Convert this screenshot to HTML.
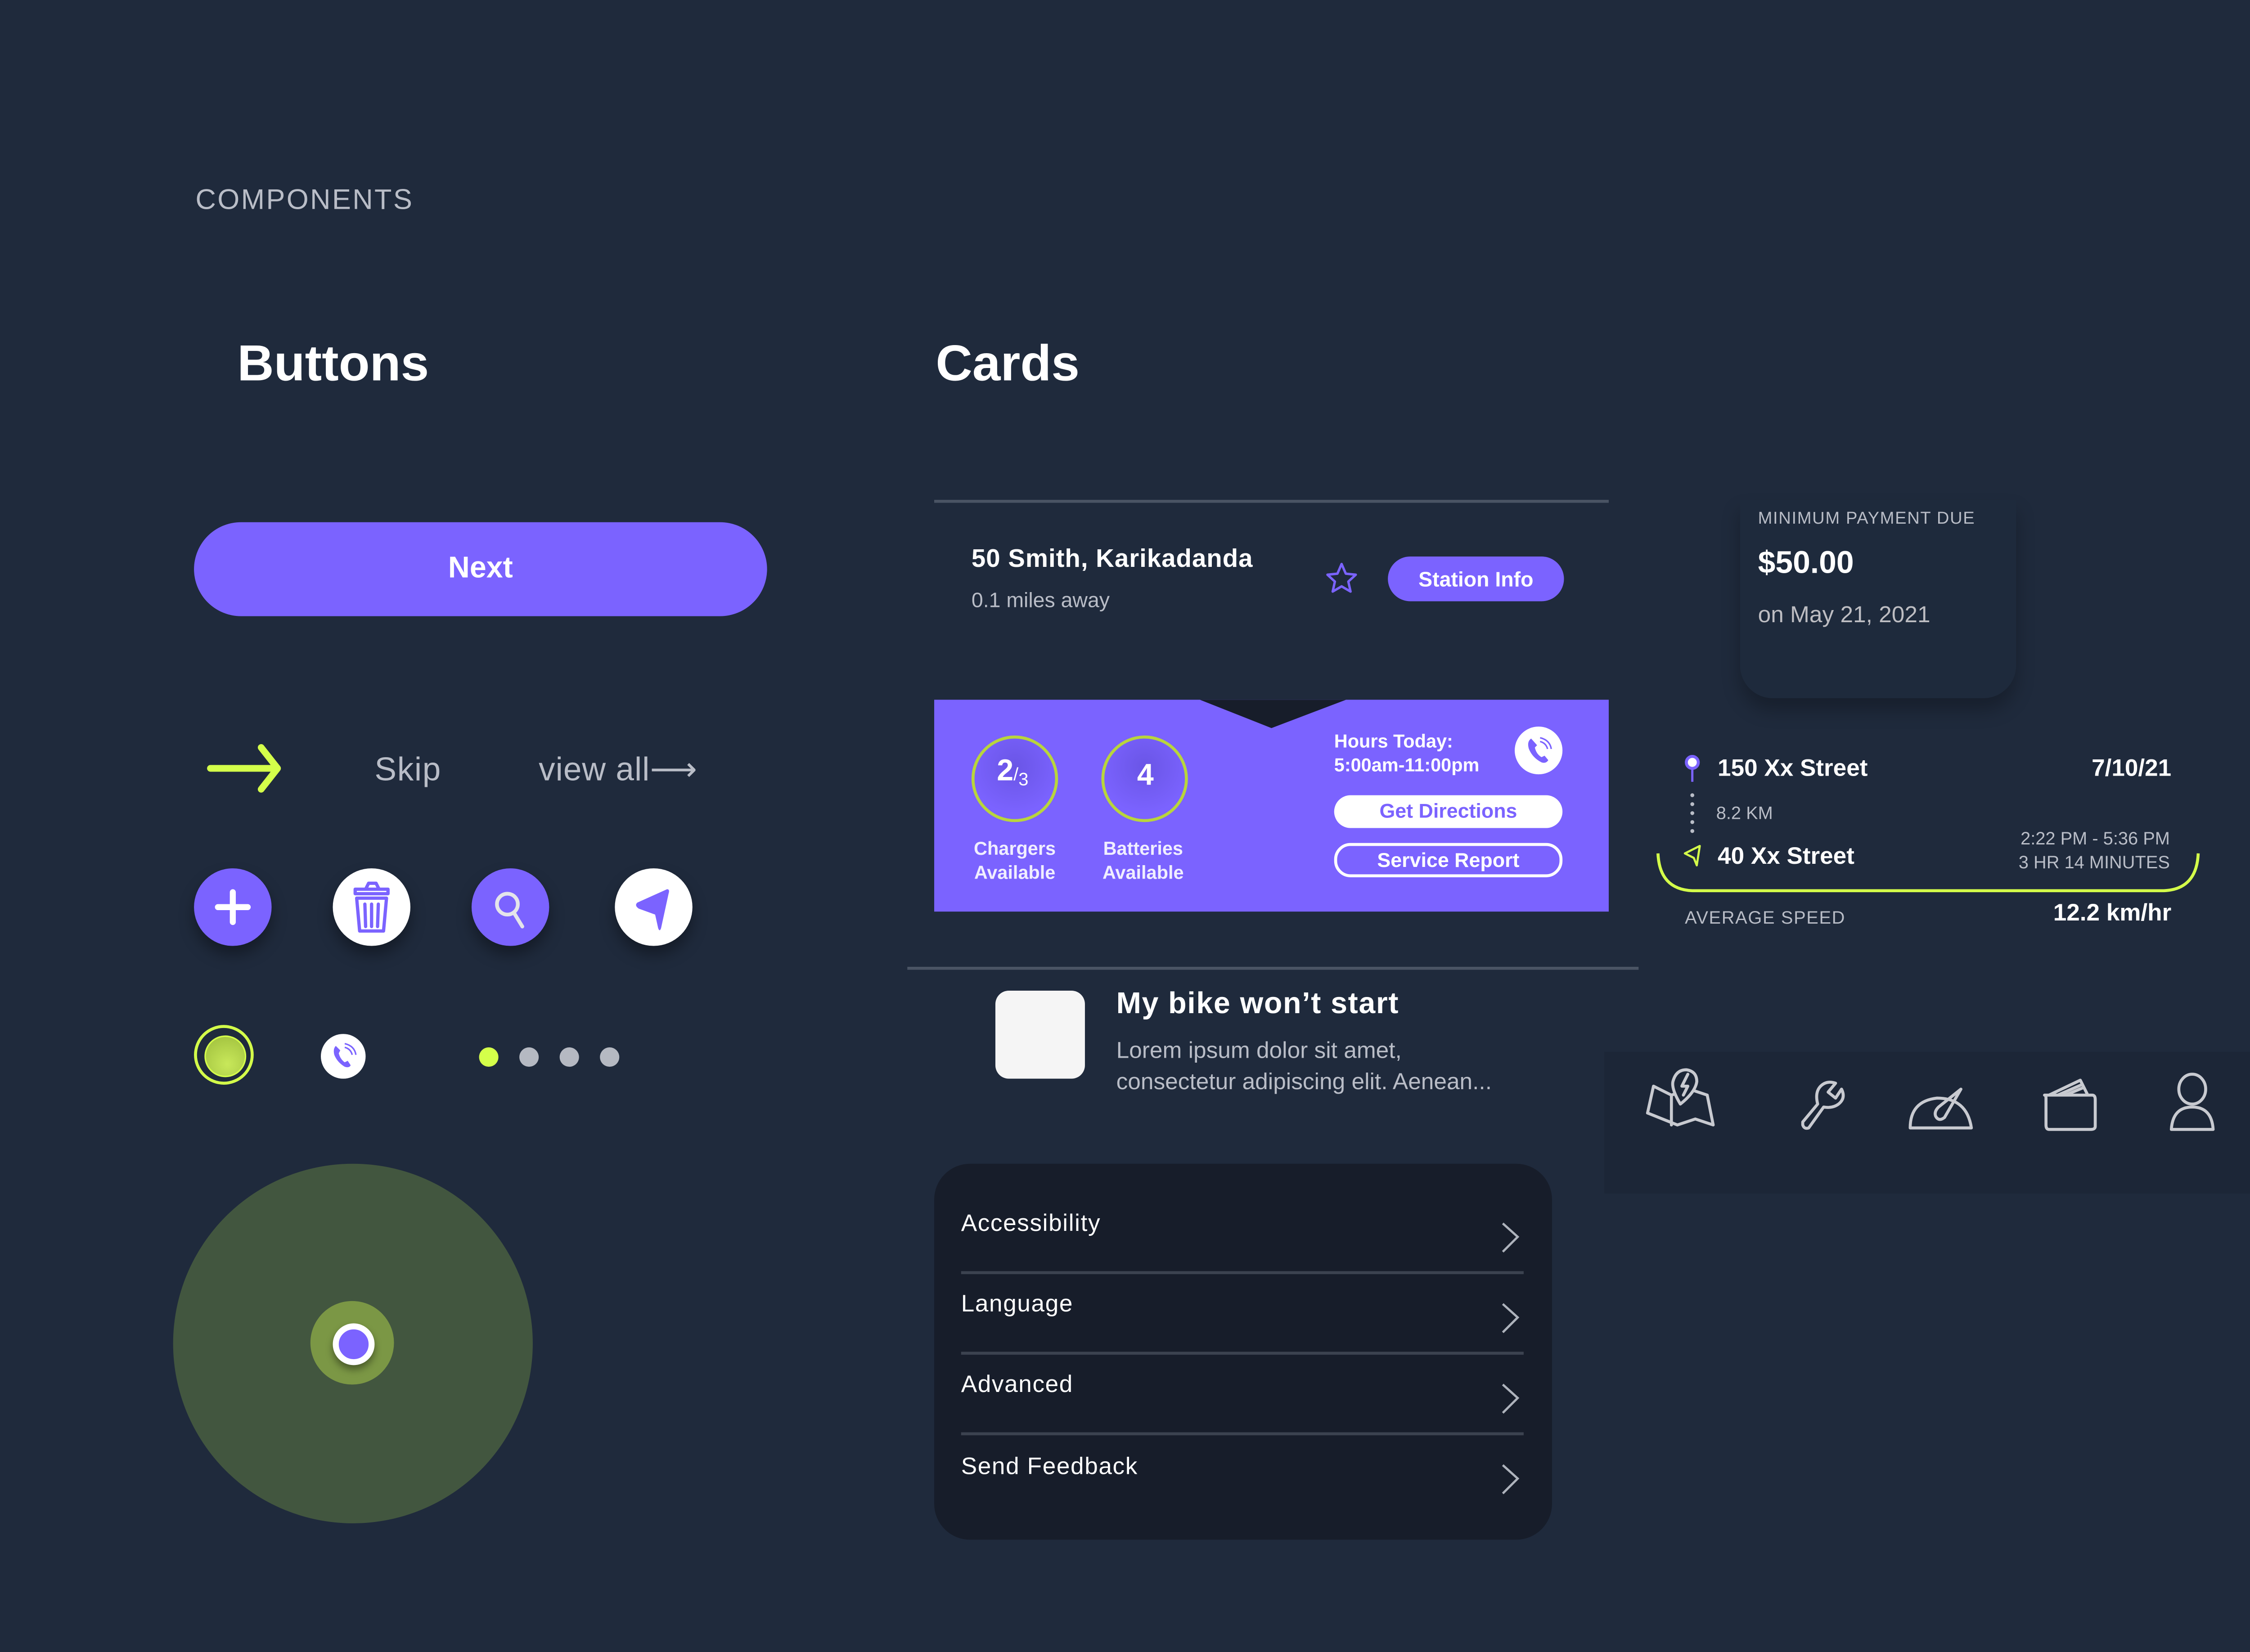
<!DOCTYPE html>
<html><head><meta charset="utf-8">
<style>
html,body{margin:0;padding:0;background:#1f2a3c;}
body{width:5200px;height:3672px;overflow:hidden;}
#s{position:absolute;left:0;top:0;width:1568px;height:1107px;transform:scale(3.3163);transform-origin:0 0;background:#1f2a3c;font-family:"Liberation Sans",sans-serif;color:#fff;}
.a{position:absolute;white-space:nowrap;}
.c{position:absolute;border-radius:50%;}
.g{color:#b9bdc7}
.row{position:absolute;left:644px;font-size:16px;letter-spacing:.5px;color:#fff}
.div{position:absolute;left:644px;width:377px;height:2px;background:#3c4350}
</style></head><body><div id="s">
<div class="a g" style="left:131px;top:124px;font-size:19px;letter-spacing:1px;">COMPONENTS</div>
<div class="a" style="left:159px;top:225px;font-size:34px;font-weight:bold;">Buttons</div>
<div class="a" style="left:627px;top:225px;font-size:34px;font-weight:bold;">Cards</div>

<div class="a" style="left:130px;top:350px;width:384px;height:63px;border-radius:32px;background:#7b63ff;text-align:center;line-height:63px;font-size:20px;font-weight:bold;">Next</div>

<svg class="a" style="left:138px;top:498px" width="54" height="34" viewBox="0 0 54 34"><path d="M3 17H47M37 3L48 17L37 31" fill="none" stroke="#d4ff4a" stroke-width="4.5" stroke-linecap="round" stroke-linejoin="round"/></svg>
<div class="a g" style="left:251px;top:503px;font-size:22px;letter-spacing:.5px;">Skip</div>
<div class="a g" style="left:361px;top:503px;font-size:22px;letter-spacing:.3px;">view all⟶</div>

<div class="c" style="left:130px;top:582px;width:52px;height:52px;background:#7b63ff;box-shadow:0 6px 10px rgba(0,0,0,.35)"></div>
<svg class="a" style="left:130px;top:582px" width="52" height="52"><path d="M26 16V36M16 26H36" stroke="#fff" stroke-width="4" stroke-linecap="round"/></svg>
<div class="c" style="left:223px;top:582px;width:52px;height:52px;background:#fff;box-shadow:0 6px 10px rgba(0,0,0,.35)"></div>
<svg class="a" style="left:223px;top:582px" width="52" height="52"><g fill="none" stroke="#7b63ff" stroke-width="2.2" stroke-linejoin="round"><path d="M15 14H37V17H15Z M22 14L24 10H29L31 14"/><path d="M16 20H36L34 42H18Z"/><path d="M21.5 24L22 39M26 24V39M30.5 24L30 39" stroke-linecap="round"/></g></svg>
<div class="c" style="left:316px;top:582px;width:52px;height:52px;background:#7b63ff;box-shadow:0 6px 10px rgba(0,0,0,.35)"></div>
<svg class="a" style="left:316px;top:582px" width="52" height="52"><circle cx="24" cy="24" r="7" fill="none" stroke="#e4e4ea" stroke-width="2.5"/><path d="M28.5 30L34 39" stroke="#e4e4ea" stroke-width="2.5" stroke-linecap="round"/></svg>
<div class="c" style="left:412px;top:582px;width:52px;height:52px;background:#fff;box-shadow:0 6px 10px rgba(0,0,0,.35)"></div>
<svg class="a" style="left:412px;top:582px" width="52" height="52"><path d="M15 23L35 14Q37 14 36 17L31 40Q30 43 29 40L27 31L16 27Q13 25 15 23Z" fill="#7b63ff"/></svg>

<div class="c" style="left:130px;top:687px;width:36px;height:36px;border:2px solid #d4ff4a;"></div>
<div class="c" style="left:137px;top:694px;width:26px;height:26px;background:radial-gradient(circle at 55% 70%,#c8e85a,#9dbd3c);border:1.5px solid #d4ff4a;"></div>
<div class="c" style="left:215px;top:693px;width:30px;height:30px;background:#fff;"></div>
<svg class="a" style="left:215px;top:693px" width="30" height="30"><path d="M10 8Q8 10 9 14Q11 19 16 22Q19 23 20 21L18 18L16 19Q13 17 12 13L13 11Z" fill="#7b63ff"/><path d="M16 9Q20 10 21 14M16 6.5Q22.5 8 23.5 14" fill="none" stroke="#7b63ff" stroke-width="1"/></svg>
<div class="c" style="left:321px;top:702px;width:13px;height:13px;background:#d4ff4a"></div>
<div class="c" style="left:348px;top:702px;width:13px;height:13px;background:#b5b9c2"></div>
<div class="c" style="left:375px;top:702px;width:13px;height:13px;background:#b5b9c2"></div>
<div class="c" style="left:402px;top:702px;width:13px;height:13px;background:#b5b9c2"></div>

<div class="c" style="left:116px;top:780px;width:241px;height:241px;background:#42563f"></div>
<div class="c" style="left:208px;top:872px;width:56px;height:56px;background:#7b9745"></div>
<div class="c" style="left:223px;top:887px;width:20px;height:20px;border:4px solid #fff;background:#7b63ff;box-shadow:0 3px 5px rgba(0,0,0,.4)"></div>

<!-- station card -->
<div class="a" style="left:626px;top:335px;width:452px;height:2px;background:#4a5464"></div>
<div class="a" style="left:651px;top:365px;font-size:17px;font-weight:bold;letter-spacing:.3px;">50 Smith, Karikadanda</div>
<div class="a g" style="left:651px;top:394px;font-size:14px;">0.1 miles away</div>
<svg class="a" style="left:887px;top:376px" width="24" height="24"><path d="M12 2L14.8 8.5L21.5 9.2L16.5 13.8L18 20.5L12 17L6 20.5L7.5 13.8L2.5 9.2L9.2 8.5Z" fill="none" stroke="#7b63ff" stroke-width="1.6" stroke-linejoin="round"/></svg>
<div class="a" style="left:930px;top:373px;width:118px;height:30px;border-radius:15px;background:#7b63ff;text-align:center;line-height:30px;font-size:14px;font-weight:bold;">Station Info</div>

<div class="a" style="left:626px;top:469px;width:452px;height:142px;background:#7b63ff"></div>
<svg class="a" style="left:626px;top:469px" width="452" height="30"><path d="M178 0L226 19L276 0Z" fill="#171d2a"/></svg>
<div class="c" style="left:651px;top:493px;width:54px;height:54px;border:2.5px solid #b9d53c;background:radial-gradient(circle at 50% 35%,#6a55e6,#7b63ff 70%);"></div>
<div class="a" style="left:668px;top:506px;font-size:20px;font-weight:bold;">2<span style="font-size:12px;font-weight:normal">/<sub style="font-size:12px">3</sub></span></div>
<div class="c" style="left:738px;top:493px;width:54px;height:54px;border:2.5px solid #b9d53c;background:radial-gradient(circle at 50% 35%,#6a55e6,#7b63ff 70%);"></div>
<div class="a" style="left:738px;top:509px;width:59px;text-align:center;font-size:20px;font-weight:bold;">4</div>
<div class="a" style="left:651px;top:561px;font-size:12.5px;line-height:16px;font-weight:bold;color:#f0eeff;text-align:center;width:58px;">Chargers<br>Available</div>
<div class="a" style="left:737px;top:561px;font-size:12.5px;line-height:16px;font-weight:bold;color:#f0eeff;text-align:center;width:58px;">Batteries<br>Available</div>
<div class="a" style="left:894px;top:489px;font-size:12.5px;line-height:16px;font-weight:bold;">Hours Today:<br>5:00am-11:00pm</div>
<div class="c" style="left:1015px;top:487px;width:32px;height:32px;background:#fff;"></div>
<svg class="a" style="left:1015px;top:487px" width="32" height="32"><path d="M11 8Q8 10 9.5 15Q12 21 18 24Q21 25 22.5 22.5L20 19.5L18 20.5Q14.5 18.5 13.5 14L15 12.5Z" fill="#7b63ff"/><path d="M17 10Q21 11 22 15M17 7.5Q23.5 9 24.5 15" fill="none" stroke="#7b63ff" stroke-width="1"/></svg>
<div class="a" style="left:894px;top:533px;width:153px;height:22px;border-radius:11px;background:#fff;color:#7b63ff;text-align:center;line-height:22px;font-size:13.5px;font-weight:bold;">Get Directions</div>
<div class="a" style="left:894px;top:565px;width:149px;height:19px;border-radius:11px;border:2px solid #fff;text-align:center;line-height:19px;font-size:13.5px;font-weight:bold;">Service Report</div>

<div class="a" style="left:608px;top:648px;width:490px;height:2px;background:#4a5464"></div>
<div class="a" style="left:667px;top:664px;width:60px;height:59px;border-radius:9px;background:#f5f5f5"></div>
<div class="a" style="left:748px;top:662px;font-size:20px;font-weight:bold;letter-spacing:.5px;">My bike won’t start</div>
<div class="a g" style="left:748px;top:694px;font-size:15.5px;line-height:21px;">Lorem ipsum dolor sit amet,<br>consectetur adipiscing elit. Aenean...</div>

<div class="a" style="left:626px;top:780px;width:414px;height:252px;border-radius:24px;background:#171d2a"></div>
<div class="row" style="top:812px">Accessibility</div>
<div class="div" style="top:852px"></div>
<div class="row" style="top:866px">Language</div>
<div class="div" style="top:906px"></div>
<div class="row" style="top:920px">Advanced</div>
<div class="div" style="top:960px"></div>
<div class="row" style="top:975px">Send Feedback</div>
<svg class="a" style="left:1000px;top:815px" width="24" height="200"><g fill="none" stroke="#aeb3bc" stroke-width="1.5"><path d="M7 5L17 14L7 24"/><path d="M7 59L17 68L7 78"/><path d="M7 113L17 122L7 132"/><path d="M7 167L17 176L7 186"/></g></svg>

<!-- payment -->
<div class="a" style="left:1166px;top:335px;width:185px;height:133px;border-radius:0 0 22px 22px;background:#1e2a3c;box-shadow:0 8px 12px rgba(0,0,0,.25)"></div>
<div class="a g" style="left:1178px;top:342px;font-size:11.5px;letter-spacing:.5px;">MINIMUM PAYMENT DUE</div>
<div class="a" style="left:1178px;top:366px;font-size:21px;font-weight:bold;">$50.00</div>
<div class="a" style="left:1178px;top:404px;font-size:15.5px;color:#bdbdc2;">on May 21, 2021</div>

<!-- trip -->
<svg class="a" style="left:1124px;top:504px" width="20" height="90"><circle cx="10" cy="7" r="4" fill="#fff" stroke="#7b63ff" stroke-width="2"/><path d="M10 11V20" stroke="#7b63ff" stroke-width="1.5"/><g fill="#b9bdc7"><circle cx="10" cy="29" r="1.3"/><circle cx="10" cy="35" r="1.3"/><circle cx="10" cy="41" r="1.3"/><circle cx="10" cy="47" r="1.3"/><circle cx="10" cy="53" r="1.3"/></g><path d="M5 68L15 63L13 76L11 71Z" fill="none" stroke="#d4ff4a" stroke-width="1.4" stroke-linejoin="round"/></svg>
<div class="a" style="left:1151px;top:507px;font-size:16px;font-weight:bold;">150 Xx Street</div>
<div class="a" style="left:1355px;top:507px;width:100px;text-align:right;font-size:16px;font-weight:bold;">7/10/21</div>
<div class="a g" style="left:1150px;top:538px;font-size:12px;">8.2 KM</div>
<div class="a g" style="left:1304px;top:554px;width:150px;text-align:right;font-size:12px;line-height:16px;">2:22 PM - 5:36 PM<br>3 HR 14 MINUTES</div>
<div class="a" style="left:1151px;top:566px;font-size:16px;font-weight:bold;">40 Xx Street</div>
<svg class="a" style="left:1108px;top:570px" width="368" height="32"><path d="M3 2Q4 26 26 27H342Q364 26 365 2" fill="none" stroke="#d4ff4a" stroke-width="2"/></svg>
<div class="a g" style="left:1129px;top:608px;font-size:12px;letter-spacing:.5px;">AVERAGE SPEED</div>
<div class="a" style="left:1330px;top:604px;width:125px;text-align:right;font-size:16px;font-weight:bold;">12.2 km/hr</div>

<!-- nav -->
<div class="a" style="left:1075px;top:705px;width:455px;height:95px;background:#1c2637"></div>
<svg class="a" style="left:1100px;top:712px" width="400" height="56"><g fill="none" stroke="#c8cad0" stroke-width="2" stroke-linejoin="round" stroke-linecap="round">
<path d="M8 16L20 22L32 18L44 22L48 42L36 38L24 42L4 34Z M20 22V42"/><path d="M26 28Q20 18 21 13Q23 5 30 5Q37 6 37 13Q36 20 26 28Z" fill="#1c2637"/><path d="M31 8L27 16H31L28 22"/>
<path d="M108 40L118 28Q116 20 120 16Q124 12 130 14L125 20L130 24L134 18Q137 24 132 28Q128 31 122 30L112 44Q109 45 108 42Z"/>
<path d="M180 44Q180 26 198 24Q218 24 221 44Z"/><path d="M214 18L203 37Q199 40 197 36Q196 33 199 30Z"/>
<path d="M270 22H302Q304 22 304 25V43Q304 45 301 45H273Q271 45 271 42V24Q271 22 270 22Z"/><path d="M273 22L294 12L299 22M279 22L295 15M284 22L296 17"/>
<ellipse cx="369" cy="18" rx="9" ry="10"/><path d="M355 45Q356 30 369 30Q382 30 383 45Z"/>
</g></svg>
</div></body></html>
